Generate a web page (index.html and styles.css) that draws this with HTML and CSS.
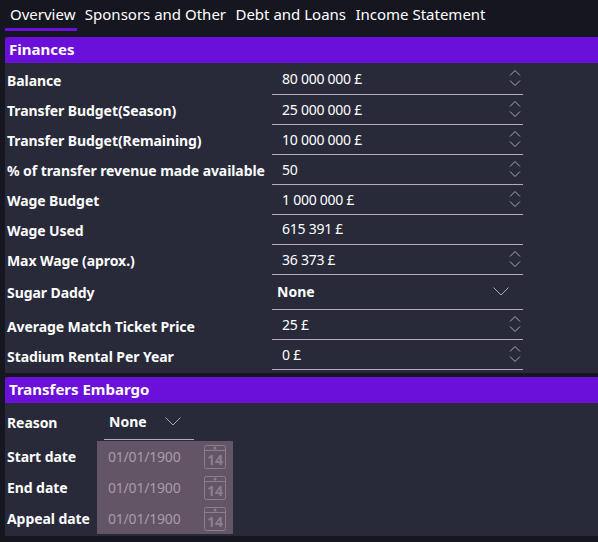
FILE: index.html
```html
<!DOCTYPE html>
<html>
<head>
    <meta charset="UTF-8">
    <meta name="viewport" content="width=device-width, initial-scale=1.0">
    <title>Club Finances</title>
    <link rel="stylesheet" href="styles.css">
</head>
<body>
    <svg class="icon-defs" width="0" height="0">
        <symbol id="spin" viewBox="0 0 12 16">
            <path d="M1 5.500l5-5 5 5M1 10.500l5 5 5-5" fill="none" stroke="#a9a9b1" stroke-width="1"/>
        </symbol>
        <symbol id="chevron" viewBox="0 0 16 9">
            <path d="M.5 .5L8 8l7.500-7.500" fill="none" stroke="#a9a9b1" stroke-width="1"/>
        </symbol>
        <symbol id="calendar" viewBox="0 0 22 24">
            <rect x=".5" y=".5" width="21" height="23" rx="2" fill="none" stroke="#8b7f8e"/>
            <path d="M1 5.500h20" stroke="#8b7f8e"/>
            <circle cx="11" cy="3" r="1.500" fill="#8b7f8e"/>
        </symbol>
    </svg>

    <nav class="tabs">
        <a class="tab active">Overview</a>
        <a class="tab">Sponsors and Other</a>
        <a class="tab">Debt and Loans</a>
        <a class="tab">Income Statement</a>
    </nav>

    <section class="panel finances">
        <h2 class="panel-title">Finances</h2>
        <div class="row first low">
            <label>Balance</label>
            <div class="field"><span>80 000 000 £</span><svg class="spin"><use href="#spin"/></svg></div>
        </div>
        <div class="row">
            <label>Transfer Budget(Season)</label>
            <div class="field"><span>25 000 000 £</span><svg class="spin"><use href="#spin"/></svg></div>
        </div>
        <div class="row">
            <label>Transfer Budget(Remaining)</label>
            <div class="field"><span>10 000 000 £</span><svg class="spin"><use href="#spin"/></svg></div>
        </div>
        <div class="row">
            <label>% of transfer revenue made available</label>
            <div class="field"><span>50</span><svg class="spin"><use href="#spin"/></svg></div>
        </div>
        <div class="row">
            <label>Wage Budget</label>
            <div class="field"><span>1 000 000 £</span><svg class="spin"><use href="#spin"/></svg></div>
        </div>
        <div class="row">
            <label>Wage Used</label>
            <div class="field readonly"><span>615 391 £</span></div>
        </div>
        <div class="row">
            <label>Max Wage (aprox.)</label>
            <div class="field"><span>36 373 £</span><svg class="spin"><use href="#spin"/></svg></div>
        </div>
        <div class="row tall">
            <label>Sugar Daddy</label>
            <div class="field select"><span>None</span><svg class="chevron"><use href="#chevron"/></svg></div>
        </div>
        <div class="row low">
            <label>Average Match Ticket Price</label>
            <div class="field"><span>25 £</span><svg class="spin"><use href="#spin"/></svg></div>
        </div>
        <div class="row low">
            <label>Stadium Rental Per Year</label>
            <div class="field"><span>0 £</span><svg class="spin"><use href="#spin"/></svg></div>
        </div>
    </section>

    <section class="panel embargo">
        <h2 class="panel-title">Transfers Embargo</h2>
        <div class="reason-row">
            <label>Reason</label>
            <div class="reason-select"><span>None</span><svg class="chevron"><use href="#chevron"/></svg></div>
        </div>
        <div class="dates">
            <div class="date-labels">
                <label>Start date</label>
                <label>End date</label>
                <label>Appeal date</label>
            </div>
            <div class="date-fields">
                <div class="date"><span>01/01/1900</span><div class="cal"><svg><use href="#calendar"/></svg><b>14</b></div></div>
                <div class="date"><span>01/01/1900</span><div class="cal"><svg><use href="#calendar"/></svg><b>14</b></div></div>
                <div class="date"><span>01/01/1900</span><div class="cal"><svg><use href="#calendar"/></svg><b>14</b></div></div>
            </div>
        </div>
    </section>
</body>
</html>
```

FILE: styles.css
```css
body {
    margin: 0;
    height: 542px;
    overflow: hidden;
    background-color: #15161f;
    color: #fff;
    font-family: "Noto Sans", sans-serif;
    font-size: 14px;
}
.icon-defs {
    position: absolute;
}

/* Tabs */
.tabs {
    display: flex;
    height: 31px;
    padding-left: 5px;
    margin-bottom: 6px;
}
.tab {
    height: 28px;
    padding: 0 1.4px 0 5px;
    margin-right: 3px;
    font-size: 15px;
    line-height: 28px;
    border-bottom: 3px solid transparent;
}
.tab.active {
    border-bottom-color: #6b0fdb;
}

/* Panels */
.panel {
    margin-left: 5px;
    background-color: #282a3a;
}
.panel-title {
    height: 26px;
    margin: 0;
    padding-left: 4px;
    background-color: #6b0fdb;
    border-top-left-radius: 3px;
    font-size: 15px;
    font-weight: 700;
    line-height: 25px;
}
.finances {
    height: 336px;
    margin-bottom: 4px;
}
.embargo {
    height: 159px;
}
label {
    padding-left: 2px;
    font-weight: 700;
    font-size: 14px;
    letter-spacing: -0.08px;
}

/* Finance rows */
.row {
    display: grid;
    grid-template-columns: 267px 251px;
    height: 30px;
    align-items: center;
}
.row.first {
    height: 32px;
}
.row.tall {
    height: 35px;
}
.row.low label {
    padding-top: 2px;
}
.field {
    display: flex;
    align-items: center;
    justify-content: space-between;
    box-sizing: border-box;
    height: 100%;
    padding: 0 2px 0 10px;
    border-bottom: 1px solid #b9a9bd;
    letter-spacing: -0.25px;
}
.field.readonly {
    padding-bottom: 2px;
}
.field.select {
    padding: 0 14px 2px 5px;
    font-weight: 700;
    letter-spacing: 0;
}
.spin {
    width: 12px;
    height: 16px;
    margin-bottom: 1px;
}
.chevron {
    width: 16px;
    height: 9px;
}

/* Embargo */
.reason-row {
    display: flex;
    align-items: center;
    height: 38px;
}
.reason-row label {
    width: 97px;
}
.reason-select {
    display: flex;
    align-items: center;
    justify-content: space-between;
    align-self: flex-start;
    box-sizing: border-box;
    width: 90px;
    height: 37px;
    padding: 0 13px 0 5px;
    font-weight: 700;
    border-bottom: 1px solid #b9a9bd;
}
.dates {
    display: flex;
}
.date-labels {
    display: flex;
    flex-direction: column;
    width: 92px;
}
.date-labels label {
    height: 31px;
    line-height: 31px;
}
.date-fields {
    width: 136px;
    height: 93px;
    background-color: #635565;
}
.date {
    display: flex;
    align-items: center;
    justify-content: space-between;
    height: 31px;
    padding: 0 7px 0 11px;
    color: #a99bab;
    letter-spacing: -0.2px;
}
.cal {
    position: relative;
    width: 22px;
    height: 24px;
}
.cal svg {
    width: 22px;
    height: 24px;
}
.cal b {
    position: absolute;
    left: 0;
    right: 0;
    top: 6px;
    font-size: 14px;
    line-height: 18px;
    letter-spacing: 0;
    text-align: center;
    color: #8b7f8e;
}
```
